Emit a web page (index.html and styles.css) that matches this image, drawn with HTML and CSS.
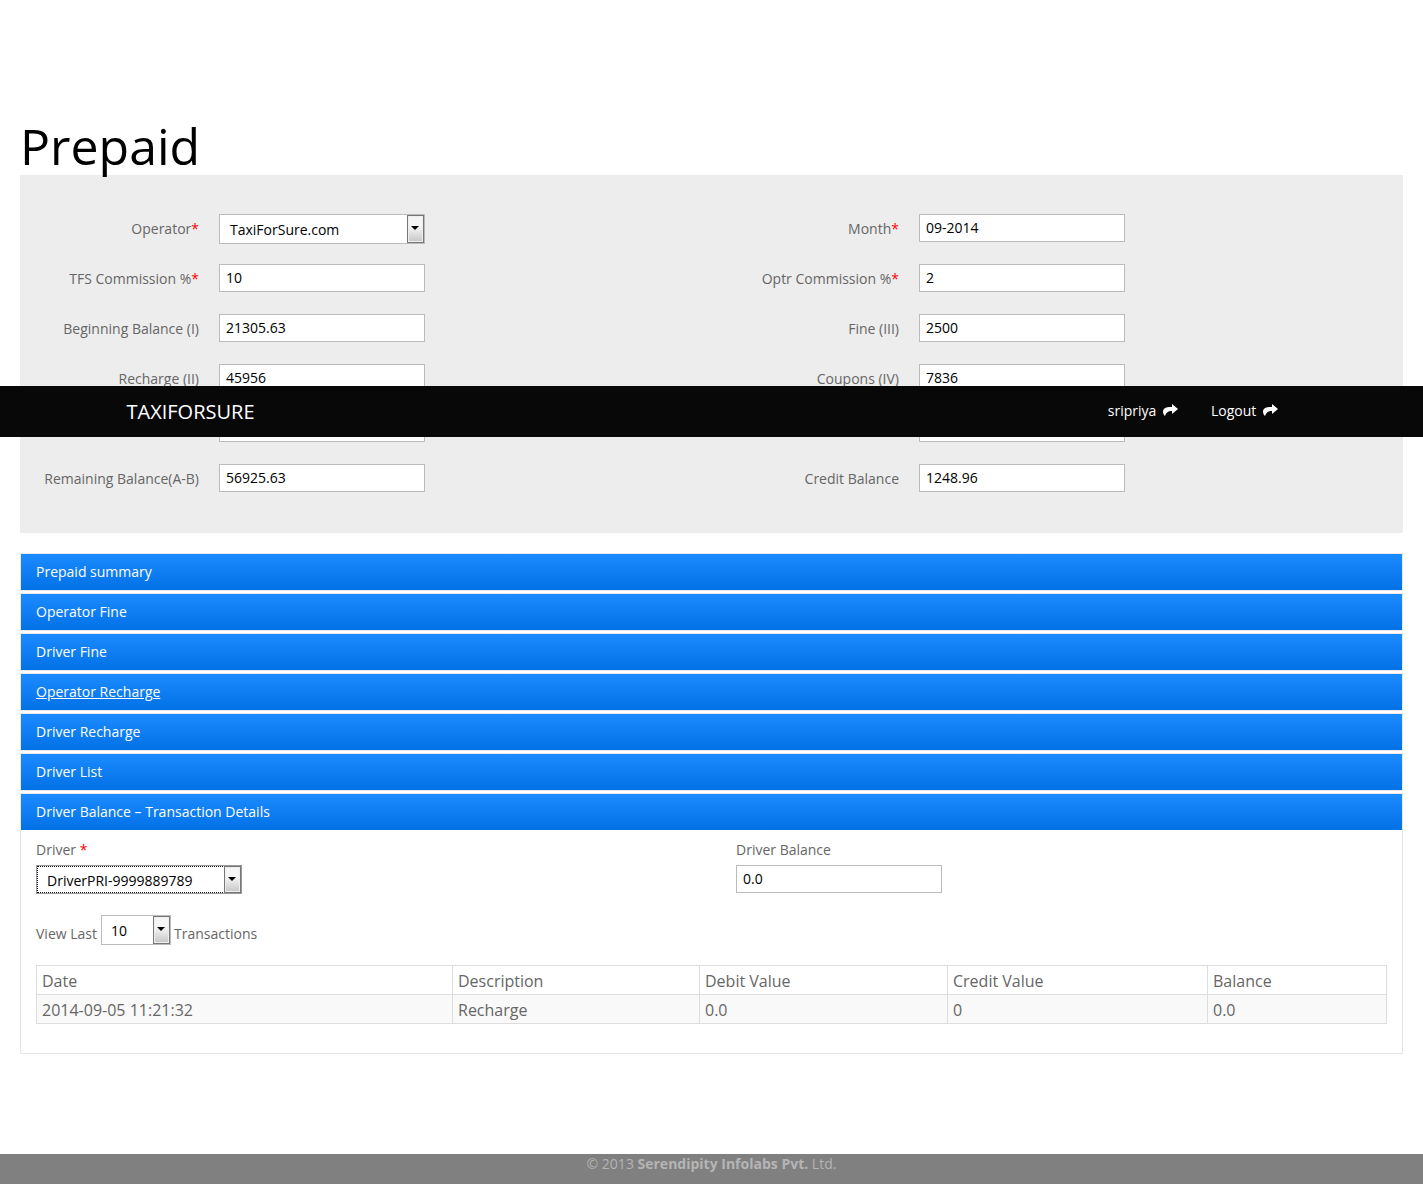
FILE: index.html
```html
<!DOCTYPE html>
<html lang="en">

<head>
    <meta charset="UTF-8">
    <meta name="viewport" content="width=device-width, initial-scale=1.0">
    <title>Prepaid</title>
    <link rel="stylesheet" href="styles.css">
</head>

<body>
    <nav class="navbar">
        <a class="brand" href="#">TAXIFORSURE</a>
        <div class="nav-links">
            <a href="#">sripriya
                <svg class="share-icon" viewBox="0 0 15 12"><path d="M9 0 15 5 9 10V7C6 6.900 3.500 7.700 2 12 .5 10.500 0 9 0 7.500 0 4 4 2.700 9 3Z"/></svg>
            </a>
            <a href="#">Logout
                <svg class="share-icon" viewBox="0 0 15 12"><path d="M9 0 15 5 9 10V7C6 6.900 3.500 7.700 2 12 .5 10.500 0 9 0 7.500 0 4 4 2.700 9 3Z"/></svg>
            </a>
        </div>
    </nav>

    <div class="content">
        <h1>Prepaid</h1>

        <form class="summary-form">
            <div class="form-row">
                <label>Operator<span class="req">*</span></label>
                <div class="fake-select wide"><span class="fake-value">TaxiForSure.com</span><span class="arrow"></span></div>
            </div>
            <div class="form-row">
                <label>Month<span class="req">*</span></label>
                <input type="text" value="09-2014">
            </div>
            <div class="form-row">
                <label>TFS Commission %<span class="req">*</span></label>
                <input type="text" value="10">
            </div>
            <div class="form-row">
                <label>Optr Commission %<span class="req">*</span></label>
                <input type="text" value="2">
            </div>
            <div class="form-row">
                <label>Beginning Balance (I)</label>
                <input type="text" value="21305.63">
            </div>
            <div class="form-row">
                <label>Fine (III)</label>
                <input type="text" value="2500">
            </div>
            <div class="form-row">
                <label>Recharge (II)</label>
                <input type="text" value="45956">
            </div>
            <div class="form-row">
                <label>Coupons (IV)</label>
                <input type="text" value="7836">
            </div>
            <div class="form-row">
                <label></label>
                <input type="text" value="">
            </div>
            <div class="form-row">
                <label></label>
                <input type="text" value="">
            </div>
            <div class="form-row">
                <label>Remaining Balance(A-B)</label>
                <input type="text" value="56925.63">
            </div>
            <div class="form-row">
                <label>Credit Balance</label>
                <input type="text" value="1248.96">
            </div>
        </form>

        <div class="accordion">
            <h3 class="acc-header">Prepaid summary</h3>
            <h3 class="acc-header">Operator Fine</h3>
            <h3 class="acc-header">Driver Fine</h3>
            <h3 class="acc-header"><a href="#">Operator Recharge</a></h3>
            <h3 class="acc-header">Driver Recharge</h3>
            <h3 class="acc-header">Driver List</h3>
            <h3 class="acc-header active">Driver Balance – Transaction Details</h3>
            <div class="acc-panel">
                <div class="driver-fields">
                    <div class="driver-col">
                        <label>Driver <span class="req">*</span></label>
                        <div class="fake-select wide focused"><span class="fake-value">DriverPRI-9999889789</span><span class="arrow"></span></div>
                    </div>
                    <div class="driver-col">
                        <label>Driver Balance</label>
                        <input type="text" value="0.0">
                    </div>
                </div>
                <div class="view-last">
                    <span>View Last</span>
                    <div class="fake-select small"><span class="fake-value">10</span><span class="arrow"></span></div>
                    <span>Transactions</span>
                </div>
                <table class="trans-table">
                    <thead>
                        <tr>
                            <th class="col-date">Date</th>
                            <th class="col-desc">Description</th>
                            <th class="col-debit">Debit Value</th>
                            <th class="col-credit">Credit Value</th>
                            <th>Balance</th>
                        </tr>
                    </thead>
                    <tbody>
                        <tr>
                            <td>2014-09-05 11:21:32</td>
                            <td>Recharge</td>
                            <td>0.0</td>
                            <td>0</td>
                            <td>0.0</td>
                        </tr>
                    </tbody>
                </table>
            </div>
        </div>
    </div>

    <footer class="footer">© 2013 <strong>Serendipity Infolabs Pvt.</strong> Ltd.</footer>
</body>

</html>
```

FILE: styles.css
```css
* {
    box-sizing: border-box;
}

body {
    margin: 0;
    position: relative;
    min-height: 1204px;
    padding-bottom: 20px;
    font-family: "Open Sans", sans-serif;
    font-size: 14px;
    color: #666;
    background-color: #fff;
}

/* fixed bar, scrolled over the form in the screenshot */
.navbar {
    position: absolute;
    top: 386px;
    left: 0;
    right: 0;
    height: 51px;
    z-index: 10;
    display: flex;
    justify-content: space-between;
    align-items: center;
    padding: 0 145px 0 126.5px;
    background-color: #080808;
}

.brand {
    color: #fff;
    font-size: 20px;
    text-decoration: none;
}

.nav-links {
    display: flex;
    gap: 33px;
    padding-bottom: 2px;
}

.nav-links a {
    color: #fff;
    text-decoration: none;
}

.share-icon {
    width: 15px;
    height: 12px;
    margin-left: 3px;
    fill: #fff;
}

.content {
    padding: 0 20px;
    height: 1154px;
}

h1 {
    margin: 0;
    padding-top: 114px;
    height: 175px;
    font-size: 50px;
    font-weight: 400;
    line-height: 65px;
    color: #000;
}

.summary-form {
    display: grid;
    grid-template-columns: 700px 1fr;
    align-content: start;
    row-gap: 20px;
    height: 358px;
    padding-top: 39px;
    background-color: #ededed;
}

.form-row {
    display: flex;
    align-items: flex-start;
    gap: 20px;
    height: 30px;
}

.form-row label {
    width: 179px;
    padding-top: 5px;
    text-align: right;
}

.req {
    color: #f00;
}

input[type="text"] {
    width: 206px;
    height: 28px;
    padding: 0 6px 2px;
    border: 1px solid #bbb;
    background-color: #fff;
    font-family: inherit;
    font-size: 14px;
    color: #000;
}

/* old style select box with the grey arrow button */
.fake-select {
    display: flex;
    justify-content: space-between;
    height: 30px;
    border: 1px solid #bbb;
    background-color: #fff;
    color: #000;
}

.fake-select.wide {
    width: 206px;
}

.fake-select.small {
    width: 70px;
    margin-right: -1px;
}

.fake-select.focused {
    height: 29px;
    border-color: #999;
    outline: 1px dotted #111;
    outline-offset: -2px;
}

.fake-value {
    padding-left: 10px;
    line-height: 29px;
}

.arrow {
    position: relative;
    width: 17px;
    border: 1px solid #777;
    box-shadow: inset 0 0 0 1px #eee;
    background: linear-gradient(#f5f5f5 40%, #c6c6c6);
}

.arrow::after {
    content: "";
    position: absolute;
    top: 10px;
    left: 3px;
    border-top: 4px solid #000;
    border-left: 4px solid transparent;
    border-right: 4px solid transparent;
}

.accordion {
    margin-top: 20px;
}

.acc-header {
    margin: 0 0 2px;
    height: 38px;
    padding-left: 15px;
    border: 1px solid #e8e8e8;
    background: linear-gradient(#1b8bff, #0271e6);
    font-size: 14px;
    font-weight: 400;
    line-height: 35px;
    color: #fff;
}

.acc-header a {
    color: #fff;
}

.acc-header.active {
    margin-bottom: 0;
    height: 37px;
    border-bottom: 0;
}

.acc-panel {
    height: 224px;
    padding: 10px 15px 0;
    border: 1px solid #e5e5e5;
    border-top: 0;
}

.driver-fields {
    display: grid;
    grid-template-columns: 700px 1fr;
}

.driver-col label {
    display: block;
    height: 25px;
    line-height: 19px;
}

.view-last {
    display: flex;
    align-items: flex-end;
    gap: 4px;
    margin-top: 21px;
    height: 30px;
}

.view-last .fake-value {
    padding-left: 9px;
    line-height: 29px;
}

.view-last span:not(.fake-value):not(.arrow) {
    line-height: 22px;
}

.trans-table {
    width: 1351px;
    margin-top: 20px;
    border-collapse: collapse;
    table-layout: fixed;
    font-size: 16px;
}

.trans-table th,
.trans-table td {
    height: 29px;
    padding: 2px 5px 0;
    border: 1px solid #ddd;
    font-weight: 400;
    text-align: left;
}

.trans-table td {
    background-color: #f9f9f9;
}

.col-date {
    width: 416px;
}

.col-desc {
    width: 247px;
}

.col-debit {
    width: 248px;
}

.col-credit {
    width: 260px;
}

.footer {
    height: 30px;
    background-color: #808080;
    color: #b5b5b5;
    text-align: center;
    line-height: 19px;
}

.footer strong {
    font-weight: 700;
}
```
